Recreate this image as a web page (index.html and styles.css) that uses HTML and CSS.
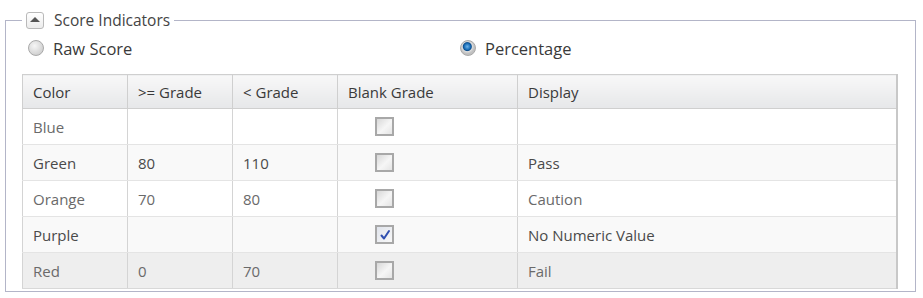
FILE: index.html
```html
<!DOCTYPE html>
<html lang="en">
<head>
    <meta charset="UTF-8">
    <title>Score Indicators</title>
    <link rel="stylesheet" href="styles.css">
</head>
<body>
    <fieldset class="panel">
        <legend class="panel-legend">
            <span class="toggle-btn"><span class="toggle-arrow"></span></span>
            <span class="legend-text">Score Indicators</span>
        </legend>

        <div class="mode-row">
            <label class="radio-item radio-left">
                <span class="radio"></span>
                <span>Raw Score</span>
            </label>
            <label class="radio-item">
                <span class="radio checked"></span>
                <span>Percentage</span>
            </label>
        </div>

        <table class="grade-table">
            <thead>
                <tr>
                    <th class="col-color">Color</th>
                    <th class="col-min">&gt;= Grade</th>
                    <th class="col-max">&lt; Grade</th>
                    <th class="col-blank">Blank Grade</th>
                    <th>Display</th>
                </tr>
            </thead>
            <tbody>
                <tr class="row light">
                    <td>Blue</td>
                    <td></td>
                    <td></td>
                    <td class="cell-check"><span class="checkbox"></span></td>
                    <td></td>
                </tr>
                <tr class="row alt">
                    <td>Green</td>
                    <td>80</td>
                    <td>110</td>
                    <td class="cell-check"><span class="checkbox"></span></td>
                    <td>Pass</td>
                </tr>
                <tr class="row light">
                    <td>Orange</td>
                    <td>70</td>
                    <td>80</td>
                    <td class="cell-check"><span class="checkbox"></span></td>
                    <td>Caution</td>
                </tr>
                <tr class="row alt">
                    <td>Purple</td>
                    <td></td>
                    <td></td>
                    <td class="cell-check">
                        <span class="checkbox checked">
                            <svg width="12" height="12" viewBox="0 0 12 12"><path d="M2.5 6.5 L5 9.5 L10 2" fill="none" stroke="#2f4fb0" stroke-width="2" stroke-linecap="round" stroke-linejoin="round"/></svg>
                        </span>
                    </td>
                    <td>No Numeric Value</td>
                </tr>
                <tr class="row light selected">
                    <td>Red</td>
                    <td>0</td>
                    <td>70</td>
                    <td class="cell-check"><span class="checkbox"></span></td>
                    <td>Fail</td>
                </tr>
            </tbody>
        </table>
    </fieldset>
</body>
</html>
```

FILE: styles.css
```css
* {
    box-sizing: border-box;
}
body {
    margin: 0;
    background-color: white;
    font-family: 'Open Sans', 'DejaVu Sans', sans-serif;
    font-size: 15px;
    color: #333;
}

/* Panel */
.panel {
    width: 911px;
    margin: 10px 0 0 5px;
    padding: 4px 16px 2px 16px;
    border: 1px solid #b3b5c8;
    border-radius: 0;
}
.panel-legend {
    display: flex;
    align-items: center;
    padding: 0 4px;
    margin-left: 0;
    color: #444;
    font-size: 15.5px;
}
.toggle-btn {
    display: inline-flex;
    align-items: center;
    justify-content: center;
    width: 18px;
    height: 17px;
    border: 1px solid #b9b9b9;
    border-radius: 3px;
    background: linear-gradient(#ffffff, #ececec);
    margin-right: 10px;
}
.toggle-arrow {
    width: 0;
    height: 0;
    border-left: 5px solid transparent;
    border-right: 5px solid transparent;
    border-bottom: 5px solid #555;
    margin-top: -1px;
}
.legend-text {
    line-height: 20px;
}

/* Radios */
.mode-row {
    display: flex;
    align-items: center;
    height: 28px;
    margin: 0 0 12px 6px;
    font-size: 16.5px;
    color: #3a3a3a;
}
.radio-item {
    display: flex;
    align-items: center;
    gap: 9px;
}
.radio-left {
    width: 432px;
}
.radio {
    display: inline-block;
    width: 16px;
    height: 16px;
    border-radius: 50%;
    border: 1px solid #a9a9a9;
    background: radial-gradient(circle at 40% 35%, #f6f6f6, #c4c4c4);
}
.radio.checked {
    background: radial-gradient(circle at 45% 40%, #6fb4ea 0, #1b6fb8 3px, #0d4f8e 4px, #dcdcdc 5px, #c0c0c0 7px);
}

/* Table */
.grade-table {
    width: 876px;
    border-collapse: collapse;
    border: 1px solid #d0d0d0;
    border-right: 2px solid #c8c8c8;
}
.grade-table th {
    height: 34px;
    padding: 0 10px;
    text-align: left;
    font-weight: normal;
    color: #3a3a3a;
    background: linear-gradient(#f8f8f8, #e6e7e9);
    border: 1px solid #cfcfcf;
}
.col-color,
.col-min,
.col-max {
    width: 105px;
}
.col-blank {
    width: 180px;
}
.grade-table td {
    height: 36px;
    padding: 0 10px;
    border-left: 1px solid #d4d4d4;
    border-right: 1px solid #d4d4d4;
    border-bottom: 1px solid #e4e4e4;
}
.row.light td {
    background-color: white;
    color: #6a6a6a;
}
.row.alt td {
    background-color: #f9f9f9;
    color: #4a4a4a;
}
.row.selected td {
    background-color: #eeeeee;
    border-bottom: 1px solid #d8d8d8;
}
.cell-check {
    padding-left: 37px !important;
}
.checkbox {
    display: flex;
    align-items: center;
    justify-content: center;
    width: 19px;
    height: 19px;
    border: 2px solid #a8a8a8;
    background: linear-gradient(135deg, #d8d8d8, #f6f6f6 55%, #e4e4e4);
}
.checkbox.checked {
    background: linear-gradient(135deg, #e0e4ec, #f8f8f8);
}
```
